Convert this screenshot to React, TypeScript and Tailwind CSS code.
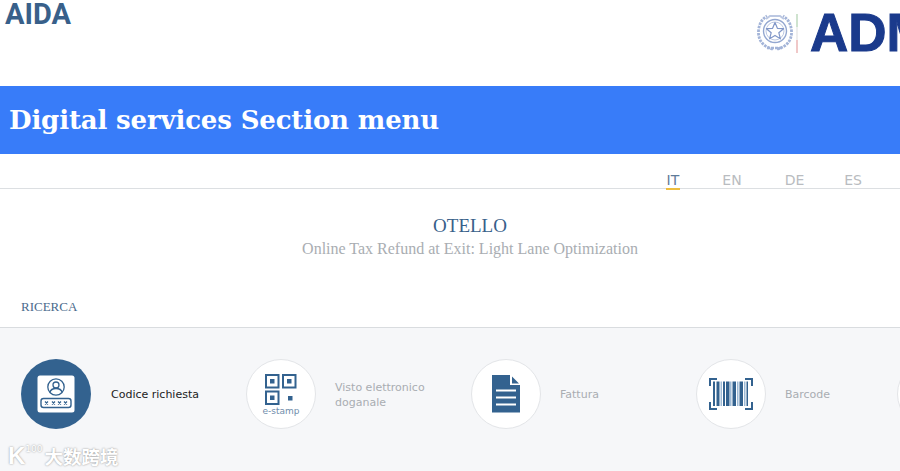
function Emblem() {
  return (
    <svg width="36" height="40" viewBox="0 0 36 40" fill="none" className="shrink-0">
      <g stroke="#a3b4d8" strokeWidth="2.800" strokeDasharray="2.5 1">
        <path d="M16 36C6 34 1 27 1.500 18C2 11 5 6 10 3" />
        <path d="M20 36C30 34 35 27 34.500 18C34 11 31 6 26 3" />
      </g>
      <circle cx="18" cy="18" r="11.500" stroke="#93a7d0" strokeWidth="1.400" />
      <circle cx="18" cy="18" r="9" stroke="#bcc8e2" strokeWidth="1" />
      <path d="M18 9.500l2.400 5.800 6.200.4-4.800 4 1.600 6.100-5.400-3.400-5.400 3.400 1.600-6.100-4.800-4 6.200-.4z" fill="#fff" stroke="#8197c8" strokeWidth="1.200" strokeLinejoin="round" />
      <path d="M9 6l4-3h10l4 3" stroke="#bcc8e2" strokeWidth="2" />
      <path d="M10 35h16" stroke="#a3b4d8" strokeWidth="2.500" strokeDasharray="3 1" />
    </svg>
  );
}

function LoginIcon() {
  return (
    <svg width="38" height="38" viewBox="0 0 38 38" fill="none">
      <rect x="0.500" y="0.500" width="37" height="37" rx="2.500" fill="#fff" />
      <circle cx="19" cy="12" r="8.200" stroke="#33628f" strokeWidth="1.300" />
      <circle cx="19" cy="10" r="3" stroke="#33628f" strokeWidth="1.300" />
      <path d="M12.800 17.500c.8-3 3.200-4 6.200-4s5.400 1 6.200 4" stroke="#33628f" strokeWidth="1.300" />
      <rect x="4" y="23.500" width="30" height="9" rx="2.500" stroke="#33628f" strokeWidth="1.400" />
      <g stroke="#33628f" strokeWidth="1.200">
        <path d="M8 26.500l3 3M11 26.500l-3 3M15 26.500l3 3M18 26.500l-3 3M21 26.500l3 3M24 26.500l-3 3M27 26.500l3 3M30 26.500l-3 3" />
      </g>
    </svg>
  );
}

function QrIcon() {
  const sq = (x: number, y: number) => (
    <g key={`${x}-${y}`}>
      <rect x={x + 1} y={y + 1} width="12.500" height="12.500" stroke="#33628f" strokeWidth="2" />
      <rect x={x + 5} y={y + 5} width="4.500" height="4.500" fill="#33628f" />
    </g>
  );
  return (
    <svg width="32" height="31" viewBox="0 0 32 31" fill="none">
      {sq(0, 0)}
      {sq(17, 0)}
      {sq(0, 16.500)}
      <rect x="23" y="22" width="4.500" height="4.500" fill="#33628f" />
    </svg>
  );
}

function DocIcon() {
  return (
    <svg width="28" height="38" viewBox="0 0 28 38" fill="none">
      <path d="M0 0h18v10H28V37.500H0z" fill="#33628f" />
      <path d="M20 1.500L27 8.500H20z" fill="#33628f" />
      <path d="M4 15.500h20M4 22.500h20M4 29.500h20" stroke="#fff" strokeWidth="2" />
    </svg>
  );
}

function BarcodeIcon() {
  const bars: [number, number, string][] = [
    [4, 2, "#33628f"], [7.500, 3, "#33628f"], [11.500, 1.500, "#9fbbd6"], [14, 2, "#33628f"],
    [17, 3.500, "#33628f"], [21, 1.500, "#9fbbd6"], [23.500, 3.500, "#33628f"], [28, 1.500, "#9fbbd6"],
    [30.500, 3.500, "#33628f"], [35, 1.500, "#9fbbd6"], [37.500, 1.500, "#33628f"],
  ];
  return (
    <svg width="44" height="32" viewBox="0 0 44 32" fill="none">
      <path d="M1 8V1h7M36 1h7v7M1 24v7h7M36 31h7v-7" stroke="#33628f" strokeWidth="2" />
      {bars.map(([x, w, c]) => (
        <rect key={x} x={x} y="3.500" width={w} height="24.500" fill={c} />
      ))}
    </svg>
  );
}

function Item({ icon, label, active, width }: { icon?: React.ReactNode; label?: React.ReactNode; active?: boolean; width: string }) {
  return (
    <div className={`flex items-center shrink-0 ${width}`}>
      <div className={`flex h-[70px] w-[70px] shrink-0 items-center justify-center rounded-full ${active ? "bg-[#33628f]" : "border border-[#e3e5e8] bg-white"}`}>
        {icon}
      </div>
      <div className={`text-[11px] leading-[15px] ${active ? "ml-5 text-[#222]" : "ml-[19px] text-[#a9adb2]"}`}>{label}</div>
    </div>
  );
}

export default function App() {
  return (
    <div className="relative h-[471px] w-[900px] overflow-hidden bg-white font-['DejaVu_Sans',sans-serif]">
      <header className="flex h-[86px] items-start justify-between">
        <div className="ml-[5px] font-['Roboto',sans-serif] text-[29px] font-bold leading-[29px] text-[#38608a]">AIDA</div>
        <div className="mt-[13px] flex w-[143px] shrink-0 items-center overflow-hidden">
          <Emblem />
          <div className="ml-[3px] flex h-[39px] w-[2px] shrink-0 flex-col">
            <div className="flex-1 bg-[#cfe3cf]" />
            <div className="flex-1 bg-[#eeeeee]" />
            <div className="flex-1 bg-[#f0c8c8]" />
          </div>
          <div className="ml-[12px] shrink-0 font-['Liberation_Sans',sans-serif] text-[53px] font-bold leading-[40px] text-[#1a3a8c] [-webkit-text-stroke:1px_#1a3a8c]">ADM</div>
        </div>
      </header>

      <div className="flex h-[68px] items-center bg-[#387cf9] pl-[9px] font-['DejaVu_Serif',serif] text-[26px] font-bold tracking-[-0.15px] text-[#fff]">
        Digital services Section menu
      </div>

      <nav className="flex h-[35px] items-start justify-end border-b border-[#dcdfe2] pr-[38px] text-[14px]">
        <div className="mt-[18px] flex leading-[16px] text-[#b9bcc0]">
          <span className="border-b-2 border-[#eebd3d] px-[1px] text-[#5f7b99]">IT</span>
          <span className="ml-[42px]">EN</span>
          <span className="ml-[43px]">DE</span>
          <span className="ml-[40px]">ES</span>
        </div>
      </nav>

      <section className="pl-[40px] pt-[26px] text-center font-['Liberation_Serif',serif]">
        <h1 className="text-[19px] leading-[22px] text-[#38608a]">OTELLO</h1>
        <p className="mt-[2px] text-[16px] leading-[20px] text-[#a9adb2]">Online Tax Refund at Exit: Light Lane Optimization</p>
      </section>

      <div className="mt-[38px] h-[31px] border-b border-[#d9dcdf] pl-[21px] font-['Liberation_Serif',serif] text-[13px] leading-[19px] text-[#4a6a8c]">
        RICERCA
      </div>

      <div className="flex h-[144px] items-start gap-0 bg-[#f6f7f9] pl-[21px] pt-[31px]">
        <Item width="w-[225px]" active icon={<LoginIcon />} label="Codice richiesta" />
        <Item
          width="w-[225px]"
          icon={
            <div className="flex flex-col items-center pt-[2px]">
              <QrIcon />
              <span className="mt-[1px] text-[9px] leading-[10px] text-[#6f8dab]">e-stamp</span>
            </div>
          }
          label={<div className="pt-[2px]">Visto elettronico<br />doganale</div>}
        />
        <Item width="w-[225px]" icon={<DocIcon />} label="Fattura" />
        <Item width="w-[201px]" icon={<BarcodeIcon />} label="Barcode" />
        <Item width="w-[70px]" />
      </div>

      <div className="absolute left-[8px] top-[442px] flex items-start text-[#fff] [text-shadow:0_0_2px_#8a8a8a]">
        <span className="font-['Liberation_Sans',sans-serif] text-[24px] font-bold leading-[28px]">K</span>
        <span className="mt-[2px] text-[9px] leading-[10px]">100</span>
        <span className="ml-[2px] mt-[2px] font-['Noto_Sans_CJK_SC',sans-serif] text-[18.500px] font-bold leading-[24px]">大数跨境</span>
      </div>
    </div>
  );
}
